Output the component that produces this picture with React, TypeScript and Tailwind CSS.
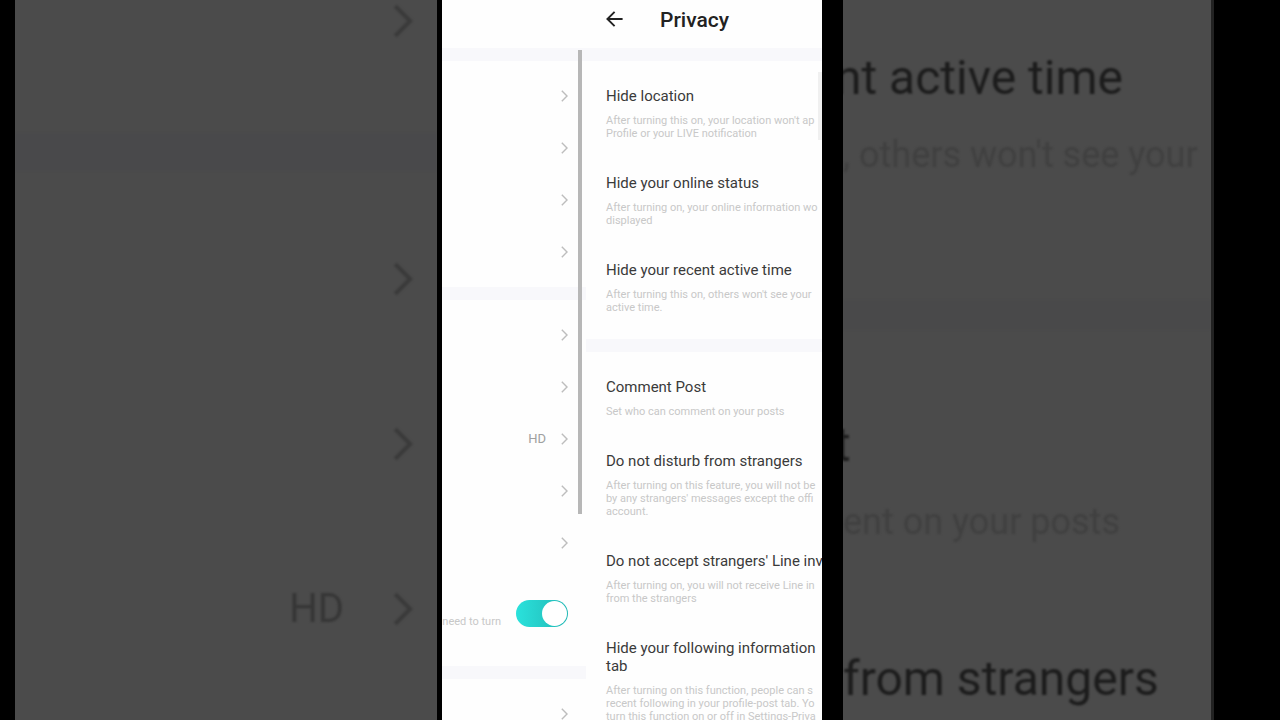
import { useState } from 'react';

type Item = { title: string[]; text: string[] };

const visibility: Item[] = [
  { title: ['Hide location'], text: ["After turning this on, your location won't ap", 'Profile or your LIVE notification'] },
  { title: ['Hide your online status'], text: ['After turning on, your online information wo', 'displayed'] },
  { title: ['Hide your recent active time'], text: ["After turning this on, others won't see your", 'active time.'] },
];

const interaction: Item[] = [
  { title: ['Comment Post'], text: ['Set who can comment on your posts'] },
  { title: ['Do not disturb from strangers'], text: ['After turning on this feature, you will not be', "by any strangers' messages except the offi", 'account.'] },
  { title: ["Do not accept strangers' Line inv"], text: ['After turning on, you will not receive Line in', 'from the strangers'] },
  { title: ['Hide your following information', 'tab'], text: ['After turning on this function, people can s', 'recent following in your profile-post tab. Yo', 'turn this function on or off in Settings-Priva'] },
];

function Chevron({ className }: { className: string }) {
  return (
    <svg viewBox="0 0 7 12" fill="none" stroke="currentColor" strokeWidth="1.4" className={className}>
      <path d="M0.8 0.8L6 6L0.8 11.2" />
    </svg>
  );
}

function LinkRow({ name, value }: { name: string; value?: string }) {
  return (
    <button type="button" aria-label={name} className="flex h-[52px] w-full items-center justify-end gap-[15px] pr-[18px]">
      {value && <span className="text-[13px] leading-4 text-[#a0a0a0]">{value}</span>}
      <Chevron className="h-3 w-[7px] text-[#bdbdbd]" />
    </button>
  );
}

function Band() {
  return <div className="h-[13px] shrink-0 bg-[#f8f8fb]" />;
}

function Lines({ lines }: { lines: string[] }) {
  return (
    <>
      {lines.map((line) => (
        <span key={line} className="block">{line}</span>
      ))}
    </>
  );
}

function PrivacySection({ items }: { items: Item[] }) {
  return (
    <section className="space-y-[34px] pt-[26px] pb-[25px] pl-5 whitespace-nowrap">
      {items.map((item) => (
        <div key={item.title[0]} className="space-y-[9px]">
          <h2 className="text-[15px] leading-[18px] text-[#3a3a3a]"><Lines lines={item.title} /></h2>
          <p className="text-[11px] leading-[13px] text-[#c8c8c8]"><Lines lines={item.text} /></p>
        </div>
      ))}
    </section>
  );
}

function SettingsPage() {
  const [enabled, setEnabled] = useState(true);

  return (
    <div className="relative w-36 shrink-0 overflow-hidden">
      <div className="h-12" />
      <Band />
      <section className="py-[9px]">
        <LinkRow name="Account" />
        <LinkRow name="Notifications" />
        <LinkRow name="Privacy" />
        <LinkRow name="Blocked" />
      </section>
      <Band />
      <section className="py-[9px]">
        <LinkRow name="Language" />
        <LinkRow name="Storage" />
        <LinkRow name="Video quality" value="HD" />
        <LinkRow name="Network" />
        <LinkRow name="Help" />
        <div className="flex h-[88px] items-center justify-end gap-[15px] pr-[18px]">
          <label htmlFor="turn" className="pt-4 text-[11px] leading-[13px] whitespace-nowrap text-[#c8c8c8]">need to turn</label>
          <input
            id="turn"
            type="checkbox"
            role="switch"
            checked={enabled}
            onChange={(e) => setEnabled(e.target.checked)}
            className="h-[27px] w-[52px] shrink-0 appearance-none rounded-full bg-[#d0d0d0] p-px before:block before:size-[25px] before:rounded-full before:bg-white checked:bg-linear-to-r checked:from-[#2ae2dc] checked:to-[#22b8b5] checked:before:ml-[25px]"
          />
        </div>
      </section>
      <Band />
      <section className="py-[9px]">
        <LinkRow name="About" />
      </section>
      <div className="absolute top-[50px] right-1 h-[464px] w-1 bg-[#b7b7b7]" />
    </div>
  );
}

function PrivacyPage() {
  return (
    <div className="relative min-w-0 flex-1 overflow-hidden">
      <header className="flex h-12 items-start gap-[37px] pt-2 pl-5">
        <button type="button" aria-label="Back" className="pt-[3px]">
          <svg viewBox="0 0 17 16" fill="none" stroke="#222" strokeWidth="1.9" className="h-4 w-[17px]">
            <path d="M8.6 0.8L1.4 8L8.6 15.2M1.4 8H16.6" />
          </svg>
        </button>
        <h1 className="text-[21px] leading-6 font-medium text-[#222]">Privacy</h1>
      </header>
      <Band />
      <PrivacySection items={visibility} />
      <Band />
      <PrivacySection items={interaction} />
      <div className="absolute top-[72px] right-0 h-[68px] w-1 bg-[#f0f0f0]" />
    </div>
  );
}

function BackdropRow({ value }: { value?: string }) {
  return (
    <div className="flex h-[165px] items-center justify-end gap-[49px] pr-6">
      {value && <span className="text-[40px] leading-[48px] text-[#363636]">{value}</span>}
      <Chevron className="h-9 w-5 text-[#3a3a3a]" />
    </div>
  );
}

function BackdropLeft() {
  return (
    <div aria-hidden="true" className="min-w-0 flex-[422] overflow-hidden bg-[#4b4b4b]">
      <div className="-mt-[62px] blur-[1px]">
        <BackdropRow />
        <div className="mt-[30px] mb-[25px] h-[38px] bg-[#49494b]" />
        <BackdropRow />
        <BackdropRow />
        <BackdropRow value="HD" />
      </div>
    </div>
  );
}

function BackdropRight() {
  return (
    <div aria-hidden="true" className="min-w-0 flex-[368] overflow-hidden bg-[#4b4b4b] whitespace-nowrap">
      <div className="pt-[50px] blur-[1px]">
        <p className="-ml-2 text-[48px] leading-[56px] text-[#1c1c1c]">nt active time</p>
        <p className="pt-7 text-[36px] leading-[42px] text-[#404040]">, others won't see your</p>
        <div className="mt-[124px] mb-[87px] h-[30px] bg-[#49494a]" />
        <p className="-ml-2 text-[48px] leading-[56px] text-[#1c1c1c]">t</p>
        <p className="pt-7 text-[36px] leading-[42px] text-[#404040]">ent on your posts</p>
        <p className="pt-[108px] text-[48px] leading-[56px] text-[#1c1c1c]">from strangers</p>
      </div>
    </div>
  );
}

export default function App() {
  return (
    <div className="flex h-screen overflow-hidden bg-black pr-[66px] pl-[15px] font-['Roboto',sans-serif]">
      <BackdropLeft />
      <main className="mr-[21px] ml-[5px] flex w-[380px] shrink-0 overflow-hidden bg-[#fefefe]">
        <SettingsPage />
        <PrivacyPage />
      </main>
      <BackdropRight />
      <div className="w-[3px] shrink-0 bg-[#222]" />
    </div>
  );
}
